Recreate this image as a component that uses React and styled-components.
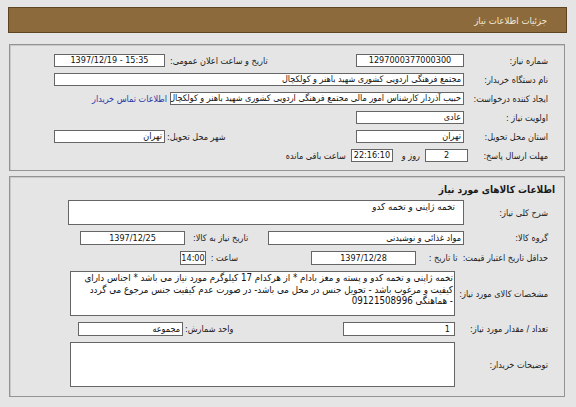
import React from "react";
import styled, { createGlobalStyle } from "styled-components";

const Global = createGlobalStyle`
  html, body { margin: 0; padding: 0; background: #e5e5e5; }
  body {
    padding: 7px 9px 0 8px;
    font-family: "DejaVu Sans Condensed", "DejaVu Sans", sans-serif;
    font-size: 9px;
    color: #1a1a1a;
  }
`;

const Page = styled.div`
  direction: rtl;
  width: 559px;
`;

const Header = styled.div`
  height: 24px;
  background: #8c6a3c;
  border: 1px solid #5e4422;
  display: flex;
  align-items: center;
  padding-right: 19px;
  color: #f3ead9;
  font-size: 9.5px;
`;

const Panel = styled.section`
  margin: ${(p) => p.$mt}px 2px 0 1px;
  border: 1px solid #939393;
  box-shadow: inset 1px 1px 0 #c9c9c9;
  background: #e5e5e5;
  padding: ${(p) => p.$pad};
  display: flex;
  flex-direction: column;
  gap: ${(p) => p.$gap}px;
`;

const Title = styled.div`
  font-weight: bold;
  font-size: 10px;
  height: 14px;
  line-height: 14px;
  margin: 0 -7px -3px 0;
  padding-top: 6px;
`;

const Row = styled.div`
  display: flex;
  align-items: center;
  min-height: ${(p) => p.$h || 19}px;
`;

const Label = styled.div`
  width: ${(p) => p.$w}px;
  flex-shrink: 0;
  text-align: ${(p) => p.$align || "right"};
  padding-left: ${(p) => p.$pl || 0}px;
  box-sizing: border-box;
  white-space: nowrap;
`;

const Gap = styled.div`
  width: ${(p) => p.$w}px;
  flex-shrink: 0;
`;

const Field = styled.div`
  width: ${(p) => p.$w}px;
  height: ${(p) => p.$h || 13}px;
  flex-shrink: 0;
  box-sizing: border-box;
  background: #fff;
  border: 1px solid #666;
  line-height: ${(p) => (p.$h || 13) - 2}px;
  text-align: ${(p) => p.$align || "right"};
  direction: ${(p) => (p.$ltr ? "ltr" : "rtl")};
  padding: 0 ${(p) => p.$pr ?? 2}px 0 ${(p) => p.$pl ?? 2}px;
  white-space: nowrap;
  overflow: hidden;
  color: #111;
`;

const TextArea = styled.div`
  width: ${(p) => p.$w}px;
  height: ${(p) => p.$h}px;
  flex-shrink: 0;
  box-sizing: border-box;
  background: #fff;
  border: 1px solid #666;
  font-size: 9.7px;
  line-height: 11.5px;
  padding: 0 ${(p) => p.$pr ?? 1}px 0 1px;
  overflow: hidden;
  color: #111;
`;

const Line = styled.div`
  white-space: nowrap;
`;

const Inline = styled.span`
  margin: 0 5px 0 9px;
  white-space: nowrap;
`;

const Link = styled.a`
  margin-right: 3px;
  color: #2c36a6;
  white-space: nowrap;
  text-decoration: none;
`;

export default function App() {
  return (
    <Page>
      <Global />
      <Header>جزئیات اطلاعات نیاز</Header>

      <Panel $mt={11} $pad="6px 16px 5px 0" $gap={0}>
        <Row>
          <Label $w={84}>شماره نیاز:</Label>
          <Field $w={108} $align="center" $ltr>1297000377000300</Field>
          <Gap $w={75} />
          <Label $w={116} $align="left" $pl={5}>تاریخ و ساعت اعلان عمومی:</Label>
          <Field $w={111} $align="center" $ltr>1397/12/19 - 15:35</Field>
        </Row>
        <Row>
          <Label $w={84}>نام دستگاه خریدار:</Label>
          <Field $w={410}>مجتمع فرهنگی اردویی کشوری شهید باهنر و کولکچال</Field>
        </Row>
        <Row>
          <Label $w={84}>ایجاد کننده درخواست:</Label>
          <Field $w={294}>حبیب آذردار کارشناس امور مالی  مجتمع فرهنگی اردویی کشوری شهید باهنر و کولکچال</Field>
          <Link href="#">اطلاعات تماس خریدار</Link>
        </Row>
        <Row>
          <Label $w={84}>اولویت نیاز :</Label>
          <Field $w={108}>عادی</Field>
        </Row>
        <Row>
          <Label $w={84}>استان محل تحویل:</Label>
          <Field $w={108}>تهران</Field>
          <Gap $w={75} />
          <Label $w={116} $align="left" $pl={2}>شهر محل تحویل:</Label>
          <Field $w={111}>تهران</Field>
        </Row>
        <Row>
          <Label $w={80}>مهلت ارسال پاسخ:</Label>
          <Field $w={43} $align="center" $ltr>2</Field>
          <Inline>روز و</Inline>
          <Field $w={42} $align="center" $ltr>22:16:10</Field>
          <Inline>ساعت باقی مانده</Inline>
        </Row>
      </Panel>

      <Panel $mt={5} $pad="0 16px 9px 0" $gap={6}>
        <Title>اطلاعات کالاهای مورد نیاز</Title>
        <Row $h={25}>
          <Label $w={84}>شرح کلی نیاز:</Label>
          <TextArea $w={396} $h={25} $pr={8}>
            <Line>تخمه ژاپنی و تخمه کدو</Line>
          </TextArea>
        </Row>
        <Row $h={14}>
          <Label $w={84}>گروه کالا:</Label>
          <Field $w={196} $h={14}>مواد غذائی و نوشیدنی</Field>
          <Gap $w={16} />
          <Label $w={67} $align="left" $pl={8}>تاریخ نیاز به کالا:</Label>
          <Field $w={105} $h={14} $align="center" $ltr>1397/12/25</Field>
        </Row>
        <Row $h={14}>
          <Label $w={132} $pl={10}>حداقل تاریخ اعتبار قیمت:&nbsp; تا تاریخ :</Label>
          <Field $w={105} $h={14} $align="center" $ltr>1397/12/28</Field>
          <Gap $w={73} />
          <Label $w={32}>ساعت :</Label>
          <Field $w={26} $h={14} $align="center" $ltr $pr={0} $pl={0}>14:00</Field>
        </Row>
        <Row $h={45}>
          <Label $w={93}>مشخصات کالای مورد نیاز:</Label>
          <TextArea $w={385} $h={45}>
            <Line>تخمه ژاپنی و تخمه کدو و پسته و مغز بادام * از هرکدام 17 کیلوگرم مورد نیاز می باشد * اجناس دارای</Line>
            <Line>کیفیت و مرغوب باشد - تحویل جنس در محل می باشد- در صورت عدم کیفیت جنس مرجوع می گردد</Line>
            <Line>- هماهنگی 09121508996</Line>
          </TextArea>
        </Row>
        <Row $h={14}>
          <Label $w={93}>تعداد / مقدار مورد نیاز:</Label>
          <Field $w={112} $h={14} $pr={4}>1</Field>
          <Gap $w={91} />
          <Label $w={69} $align="left" $pl={2}>واحد شمارش:</Label>
          <Field $w={105} $h={14}>مجموعه</Field>
        </Row>
        <Row $h={45}>
          <Label $w={93}>توضیحات خریدار:</Label>
          <TextArea $w={385} $h={45} />
        </Row>
      </Panel>
    </Page>
  );
}
